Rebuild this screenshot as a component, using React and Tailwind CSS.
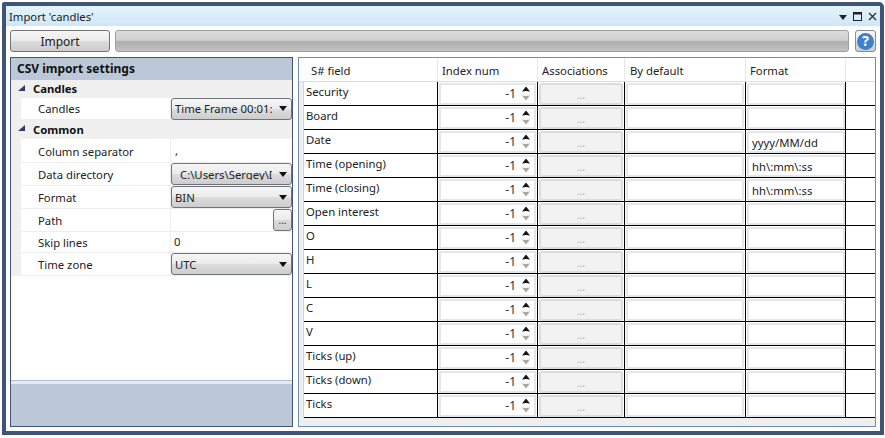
const font = { fontFamily: '"Noto Sans", "Open Sans", sans-serif' };

const rows = [
  ["Security", ""],
  ["Board", ""],
  ["Date", "yyyy/MM/dd"],
  ["Time (opening)", "hh\\:mm\\:ss"],
  ["Time (closing)", "hh\\:mm\\:ss"],
  ["Open interest", ""],
  ["O", ""],
  ["H", ""],
  ["L", ""],
  ["C", ""],
  ["V", ""],
  ["Ticks (up)", ""],
  ["Ticks (down)", ""],
  ["Ticks", ""],
];

const gridCols = "grid grid-cols-[5px_134px_100px_87px_121px_100px_1fr]";
const btnBg = "bg-[linear-gradient(to_bottom,#f6f6f6_0%,#ebebeb_50%,#dcdcdc_52%,#cdcdcd_100%)]";

function Arrow() {
  return (
    <svg width="8" height="5" viewBox="0 0 8 5" className="shrink-0">
      <path d="M0 0H8L4 5Z" fill="#111" />
    </svg>
  );
}

function Combo({ text, pad = "pl-[3px]" }) {
  return (
    <div className={`h-[22px] w-full flex items-center rounded-[3px] border border-[#70757c] text-[#222] overflow-hidden ${btnBg}`}>
      <span className={`${pad} flex-1 mr-[2px] pt-[1px] whitespace-nowrap overflow-hidden`}>{text}</span>
      <span className="w-[17px] flex justify-center shrink-0"><Arrow /></span>
    </div>
  );
}

function PropRow({ label, h, pt = "pt-[1px]", children }) {
  return (
    <div className={`flex ${h} bg-white border-b border-[#eeeeee]`}>
      <div className={`w-[150px] pl-[17px] flex items-center border-r border-[#eeeeee] text-[#222] shrink-0 ${pt}`}>{label}</div>
      <div className="flex-1 min-w-0 flex items-center text-[#222]">{children}</div>
    </div>
  );
}

function Group({ label, h, pt }) {
  return (
    <div className={`${h} flex items-center font-bold text-[#111]`}>
      <svg width="7" height="7" viewBox="0 0 7 7" className="ml-[7px] mr-[8px] mb-[2px] shrink-0">
        <path d="M7 0V6H0Z" fill="#2c3e66" />
      </svg>
      <span className={pt}>{label}</span>
    </div>
  );
}

function Spinner() {
  return (
    <div className="h-[22px] w-[97px] flex items-center justify-end border-2 border-[#e4e6ec] bg-white text-[12px] text-[#333]">
      <span className="mr-[6px]">-1</span>
      <span className="flex flex-col gap-[3px] mr-[4px]">
        <svg width="8" height="6" viewBox="0 0 8 6" className="block"><path d="M0 5.5L4 0.5L8 5.5L4 5Z" fill="#111" /></svg>
        <svg width="8" height="6" viewBox="0 0 8 6" className="block"><path d="M0 0.5L4 5.5L8 0.5L4 1Z" fill="#a8a8a8" /></svg>
      </span>
    </div>
  );
}

function Cell({ className, children }) {
  return <div className={`flex bg-white border-r border-b border-black overflow-hidden ${className}`}>{children}</div>;
}

export default function App() {
  return (
    <div style={font} className="w-[885px] h-[438px] bg-white text-[11.3px] leading-none overflow-hidden pt-[2px] pl-[2px] pr-[1px] pb-[3px]">
      <div className="w-full h-full border-4 border-[#3f5576] rounded-tr-[5px] rounded-tl-[2px] bg-white flex flex-col">
        <div className="h-[20px] flex items-center shrink-0 bg-gradient-to-b from-[#e6f3fb] to-[#cde7f8] pl-[3px] pr-[2px] text-[#222]">
          <span className="flex-1 pt-[1px]">Import 'candles'</span>
          <svg width="8" height="5" viewBox="0 0 8 5" className="mr-[6px] mt-[3px]"><path d="M0 0H8L4 5Z" fill="#222" /></svg>
          <svg width="9" height="9" viewBox="0 0 9 9" className="mr-[6px]"><rect x="0.5" y="0.5" width="8" height="8" fill="none" stroke="#222" /><path d="M0 1.5H9" stroke="#222" strokeWidth="2" /></svg>
          <svg width="9" height="9" viewBox="0 0 9 9" className="mr-[1px]"><path d="M1 1L8 8M8 1L1 8" stroke="#333" strokeWidth="1.4" /></svg>
        </div>

        <div className="h-[31px] shrink-0 bg-white flex items-start pt-[4px] pl-[4px] pr-[4px]">
          <div className={`w-[100px] h-[22px] flex items-center justify-center rounded-[3px] border border-[#70757c] text-[#222] ${btnBg} text-[12px] pt-[1px]`}>Import</div>
          <div className="flex-1 ml-[5px] mr-[6px] h-[22px] rounded-[3px] border border-[#a0a0a0] bg-[linear-gradient(to_bottom,#dcdcdc_0%,#cfcfcf_45%,#adadad_55%,#c4c4c4_100%)]" />
          <div className={`w-[21px] h-[22px] rounded-[3px] border border-[#8a8a8a] flex items-center justify-center ${btnBg}`}>
            <div className="w-[17px] h-[17px] rounded-full bg-[#3f82cc] text-white font-bold text-[14px] flex items-center justify-center">?</div>
          </div>
        </div>

        <div className="flex-1 min-h-0 flex pl-[4px] pr-[4px] pb-[4px] gap-[5px] bg-white">
          <div className="w-[283px] shrink-0 border border-[#3f5576] flex flex-col bg-white">
            <div className="h-[22px] shrink-0 bg-[#bcc8d8] flex items-center pl-[6px] font-bold text-[#111] text-[12px]">CSV import settings</div>
            <div className="bg-[#f0f0f0] flex flex-col">
              <Group label="Candles" h="h-[18px]" />
              <div className="pl-[10px]">
                <PropRow label="Candles" h="h-[22px]"><Combo text="Time Frame 00:01:00" /></PropRow>
              </div>
              <Group label="Common" h="h-[19px]" pt="pt-[1px]" />
              <div className="pl-[10px]">
                <PropRow label="Column separator" h="h-[24px]" pt="pt-[2px]"><span className="pl-[4px]">,</span></PropRow>
                <PropRow label="Data directory" h="h-[23px]"><Combo text="C:\Users\Sergey\Documents" pad="pl-[8px]" /></PropRow>
                <PropRow label="Format" h="h-[23px]"><Combo text="BIN" /></PropRow>
                <PropRow label="Path" h="h-[23px]">
                  <div className="flex-1 h-full" />
                  <div className={`w-[19px] h-[22px] rounded-[3px] border border-[#70757c] text-[#333] text-[10px] flex items-center justify-center ${btnBg}`}>...</div>
                </PropRow>
                <PropRow label="Skip lines" h="h-[21px]"><span className="pl-[3px]">0</span></PropRow>
                <PropRow label="Time zone" h="h-[23px]"><Combo text="UTC" /></PropRow>
              </div>
            </div>
            <div className="flex-1" />
            <div className="h-[1px] bg-[#a9bdd3] shrink-0" />
            <div className="h-[3px] bg-[#e9e9e9] shrink-0" />
            <div className="h-[42px] bg-[#bcc8d8] shrink-0" />
          </div>

          <div className="flex-1 min-w-0 border border-[#6f8db3] bg-[#efefef] flex flex-col">
            <div className={`h-[24px] shrink-0 bg-white ${gridCols} text-[#222] border-b border-[#dcdcdc]`}>
              <div />
              <div className="flex items-center pl-[3px] border-r border-[#e8e8e8] pt-[2px]"><span className="pl-[4px]">S# field</span></div>
              <div className="flex items-center pl-[4px] border-r border-[#e8e8e8] pt-[2px]">Index num</div>
              <div className="flex items-center pl-[4px] border-r border-[#e8e8e8] pt-[2px]">Associations</div>
              <div className="flex items-center pl-[5px] border-r border-[#e8e8e8] pt-[2px]">By default</div>
              <div className="flex items-center pl-[4px] border-r border-[#e8e8e8] pt-[2px]">Format</div>
              <div />
            </div>
            <div className="flex flex-col">
              {rows.map(([name, fmt]) => (
                <div key={name} className={`h-[24px] shrink-0 ${gridCols}`}>
                  <div className="bg-[#efefef] border-r border-[#cfd4da]" />
                  <Cell className="items-start pl-[2px] pt-[4px] text-[#222]">{name}</Cell>
                  <Cell className="items-center pl-[1px]"><Spinner /></Cell>
                  <Cell className="items-center pl-[1px]">
                    <div className="w-[84px] h-[22px] rounded-[3px] border-2 border-[#dcdcdc] bg-[#f2f2f2] text-[#aaa] text-[10px] flex items-center justify-center pt-[2px]">...</div>
                  </Cell>
                  <Cell className="items-center pl-[1px]">
                    <div className="w-[118px] h-[22px] border-2 border-[#e4e6ec] rounded-[2px] bg-white" />
                  </Cell>
                  <Cell className="items-center pl-[1px]">
                    <div className="w-[98px] h-[22px] border-2 border-[#e4e6ec] rounded-[2px] bg-white text-[#222] flex items-center pl-[3px] pt-[2px]">{fmt}</div>
                  </Cell>
                  <div className="bg-white border-b border-black" />
                </div>
              ))}
            </div>
          </div>
        </div>
      </div>
    </div>
  );
}
